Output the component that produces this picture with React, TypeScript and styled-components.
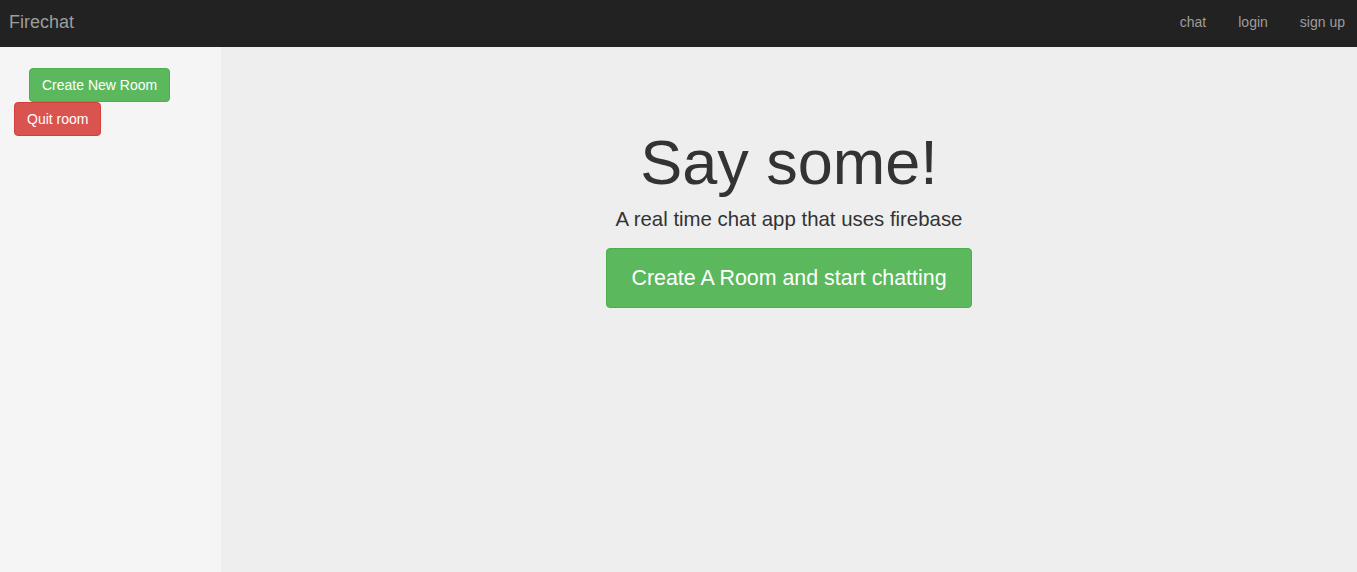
import React from "react";
import styled, { createGlobalStyle } from "styled-components";

const GlobalStyle = createGlobalStyle`
  * { box-sizing: border-box; }
  html, body { margin: 0; padding: 0; }
  body {
    font-family: "Liberation Sans", Arial, Helvetica, sans-serif;
    font-size: 14px;
    color: #333;
    background: #eeeeee;
  }
`;

const Page = styled.div`
  display: flex;
  flex-direction: column;
  min-height: 100vh;
`;

const NavBar = styled.nav`
  height: 47px;
  background: #222222;
  display: flex;
  align-items: flex-start;
  justify-content: space-between;
  padding-left: 9px;
  flex-shrink: 0;
`;

const Brand = styled.a`
  font-size: 18px;
  line-height: 20px;
  padding-top: 12px;
  color: #9d9d9d;
  text-decoration: none;
`;

const NavLinks = styled.ul`
  list-style: none;
  margin: 0 -4px 0 0;
  padding: 0;
  display: flex;
`;

const NavLink = styled.a`
  display: block;
  font-size: 14px;
  line-height: 20px;
  padding: 12px 16px 15px;
  color: #9d9d9d;
  text-decoration: none;
`;

const Body = styled.div`
  flex: 1;
  display: flex;
`;

const Sidebar = styled.aside`
  width: 221px;
  flex-shrink: 0;
  background: #f5f5f5;
  padding: 21px 0 0 14px;
  display: flex;
  flex-direction: column;
  align-items: flex-start;
`;

const Btn = styled.button<{ $variant: "success" | "danger"; $indent?: number }>`
  font-family: "Liberation Sans", Arial, Helvetica, sans-serif;
  font-size: 14px;
  line-height: 20px;
  padding: 6px 12px;
  border-radius: 4px;
  color: #fff;
  cursor: pointer;
  margin-left: ${(p) => p.$indent ?? 0}px;
  background: ${(p) => (p.$variant === "success" ? "#5cb85c" : "#d9534f")};
  border: 1px solid ${(p) => (p.$variant === "success" ? "#4cae4c" : "#d43f3a")};
`;

const Main = styled.main`
  flex: 1;
  background: #eeeeee;
  display: flex;
  flex-direction: column;
  align-items: center;
  padding-top: 81px;
`;

const Title = styled.h1`
  margin: 0;
  font-size: 63px;
  line-height: 69px;
  font-weight: 500;
  color: #333;
`;

const Lead = styled.p`
  margin: 7px 0 0;
  font-size: 20.4px;
  line-height: 30px;
  font-weight: 300;
  color: #333;
`;

const BigBtn = styled.button`
  margin-top: 14px;
  font-family: "Liberation Sans", Arial, Helvetica, sans-serif;
  font-size: 21.4px;
  line-height: 28px;
  padding: 15px 24px;
  border-radius: 4px;
  color: #fff;
  background: #5cb85c;
  border: 1px solid #4cae4c;
  cursor: pointer;
`;

export default function App() {
  return (
    <>
      <GlobalStyle />
      <Page>
        <NavBar>
          <Brand href="#">Firechat</Brand>
          <NavLinks>
            <li><NavLink href="#">chat</NavLink></li>
            <li><NavLink href="#">login</NavLink></li>
            <li><NavLink href="#">sign up</NavLink></li>
          </NavLinks>
        </NavBar>
        <Body>
          <Sidebar>
            <Btn $variant="success" $indent={15}>Create New Room</Btn>
            <Btn $variant="danger">Quit room</Btn>
          </Sidebar>
          <Main>
            <Title>Say some!</Title>
            <Lead>A real time chat app that uses firebase</Lead>
            <BigBtn>Create A Room and start chatting</BigBtn>
          </Main>
        </Body>
      </Page>
    </>
  );
}
